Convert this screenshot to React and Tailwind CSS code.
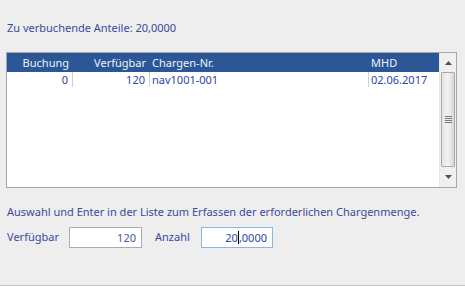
import React from 'react';

const font = { fontFamily: '"Noto Sans", "Open Sans", sans-serif' };

const ScrollBar = () => (
  <div className="w-[17px] flex flex-col bg-[#f0f0f0] border-l border-[#e6e6e6]">
    <div className="h-[19px] flex items-center justify-center">
      <svg width="7" height="4" viewBox="0 0 7 4"><path d="M0 4 L3.5 0 L7 4 Z" fill="#505050" /></svg>
    </div>
    <div className="mx-[1px] h-[95px] rounded-[1px] border border-[#a8a8a8] bg-gradient-to-r from-[#e4e4e4] via-[#f2f2f2] to-[#d8d8d8] flex items-center justify-center">
      <div className="flex flex-col gap-[1px]">
        <div className="w-[7px] h-[1px] bg-[#7a7a7a]" />
        <div className="w-[7px] h-[1px] bg-[#7a7a7a]" />
        <div className="w-[7px] h-[1px] bg-[#7a7a7a]" />
        <div className="w-[7px] h-[1px] bg-[#7a7a7a]" />
      </div>
    </div>
    <div className="flex-1 flex items-center justify-center">
      <svg width="7" height="4" viewBox="0 0 7 4"><path d="M0 0 L7 0 L3.5 4 Z" fill="#505050" /></svg>
    </div>
  </div>
);

export default function App() {
  return (
    <div className="w-[465px] h-[295px] bg-white text-[11px] text-[#3b4a9c]" style={font}>
      <div className="h-[286px] bg-[#eeeeee] border-b border-[#c4c4c4] px-[6px] pt-[20px]">
        <div className="pl-[1px] leading-[16px]">Zu verbuchende Anteile: 20,0000</div>

        <div className="mt-[16px] w-[451px] h-[136px] border border-[#a6a6a6] bg-white flex">
          <div className="flex-1 flex flex-col">
            <div className="h-[19px] bg-[#2b5797] text-[#eef2fa] flex items-center leading-none">
              <div className="w-[65px] text-right pr-[3px]">Buchung</div>
              <div className="w-[77px] text-right pr-[3px]">Verfügbar</div>
              <div className="w-[219px] pl-[3px]">Chargen-Nr.</div>
              <div className="flex-1 pl-[3px]">MHD</div>
            </div>
            <div className="h-[17px] flex text-[#2e44a8] leading-[16px]">
              <div className="w-[65px] text-right pr-[4px]">0</div>
              <div className="w-[77px] text-right pr-[4px] border-l border-[#d0d0d0] h-[15px]">120</div>
              <div className="w-[219px] pl-[2px] border-l border-[#d0d0d0] h-[15px]">nav1001-001</div>
              <div className="flex-1 pl-[2px] border-l border-[#d0d0d0] h-[15px]">02.06.2017</div>
            </div>
          </div>
          <ScrollBar />
        </div>

        <div className="mt-[16px] pl-[1px] leading-[16px]">
          Auswahl und Enter in der Liste zum Erfassen der erforderlichen Chargenmenge.
        </div>

        <div className="mt-[7px] flex items-center pl-[1px]">
          <span className="w-[62px]">Verfügbar</span>
          <div className="w-[73px] h-[21px] border border-[#acacac] bg-white text-right pr-[5px] leading-[19px] text-[#4a58a0]">120</div>
          <span className="ml-[13px] w-[46px]">Anzahl</span>
          <div className="w-[72px] h-[21px] border border-[#8ab8e6] bg-white text-right pr-[5px] leading-[19px] text-[#2e44a8] flex justify-end items-center">
            <span>20</span>
            <span className="w-[1px] h-[13px] bg-black" />
            <span>,0000</span>
          </div>
        </div>
      </div>
    </div>
  );
}
